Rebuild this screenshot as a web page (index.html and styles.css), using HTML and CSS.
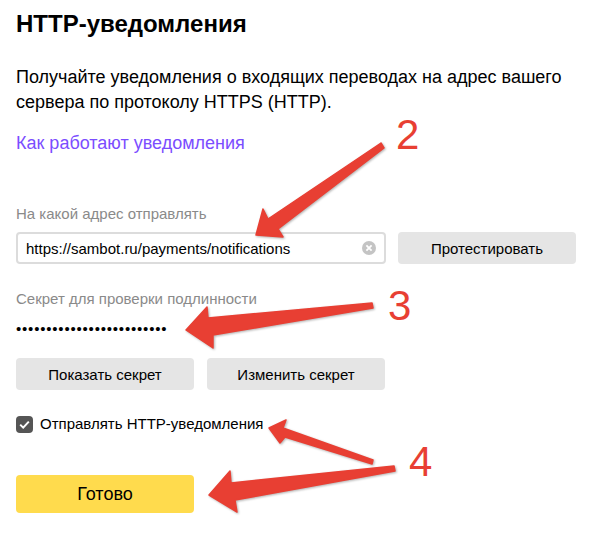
FILE: index.html
```html
<!DOCTYPE html>
<html lang="ru">
  <head>
    <meta charset="utf-8">
    <title>HTTP-уведомления</title>
    <link rel="stylesheet" href="styles.css">
  </head>
  <body>
    <div class="page">
      <h1 class="title">HTTP-уведомления</h1>
      <p class="lead">Получайте уведомления о входящих переводах на адрес вашего сервера по протоколу HTTPS (HTTP).</p>
      <a class="link" href="#">Как работают уведомления</a>

      <div class="label label-url">На какой адрес отправлять</div>
      <div class="url-row">
        <div class="field">
          <span class="field-value">https://sambot.ru/payments/notifications</span>
          <svg class="field-clear" width="14" height="14" viewBox="0 0 14 14">
            <circle cx="7" cy="7" r="7" fill="#c4c4c4"/>
            <path d="M4.4 4.4l5.2 5.2M9.6 4.4l-5.2 5.2" stroke="#fff" stroke-width="1.8" fill="none"/>
          </svg>
        </div>
        <button class="btn btn-test">Протестировать</button>
      </div>

      <div class="label label-secret">Секрет для проверки подлинности</div>
      <div class="secret">•••••••••••••••••••••••••</div>
      <div class="btn-row">
        <button class="btn">Показать секрет</button>
        <button class="btn">Изменить секрет</button>
      </div>

      <label class="check">
        <span class="check-box">
          <svg width="11" height="9" viewBox="0 0 11 9">
            <path d="M1.2 4.6l3 3 5.6-6" stroke="#fff" stroke-width="2" fill="none"/>
          </svg>
        </span>
        Отправлять HTTP-уведомления
      </label>

      <button class="btn btn-done">Готово</button>

      <!-- стрелки и цифры поверх формы -->
      <svg class="arrows" width="603" height="537" viewBox="0 0 603 537">
        <polygon points="381,143 268,219 263,209 256,235 283,237 278,229 384,148"/>
        <polygon points="372,303 208,318 207,307 186,330 213,348 213,335 373,308"/>
        <polygon points="373,460 283,428 286,420 269,428 280,443 285,437 372,464"/>
        <polygon points="394,466 231,483 230,471 209,495 237,512 235,500 395,471"/>
      </svg>
      <span class="mark mark-2">2</span>
      <span class="mark mark-3">3</span>
      <span class="mark mark-4">4</span>
    </div>
  </body>
</html>
```

FILE: styles.css
```css
* {
  box-sizing: border-box;
}

html, body {
  margin: 0;
  background: #fff;
}

.page {
  position: relative;
  width: 603px;
  height: 537px;
  padding: 11px 16px 0;
  overflow: hidden;
  font-family: "Liberation Sans", Arial, sans-serif;
  color: #000;
}

.title {
  margin: 0;
  font-size: 24px;
  line-height: 26px;
  font-weight: bold;
}

.lead {
  width: 560px;
  margin: 28px 0 0;
  font-size: 18px;
  line-height: 25px;
}

.link {
  display: block;
  margin-top: 16px;
  font-size: 18px;
  line-height: 25px;
  color: #7b4dff;
  text-decoration: none;
}

.label {
  font-size: 15px;
  line-height: 18px;
  color: #8a8a8a;
}

.label-url {
  margin-top: 49px;
}

.url-row {
  display: flex;
  gap: 12px;
  margin-top: 9px;
}

.field {
  display: flex;
  align-items: center;
  justify-content: space-between;
  width: 370px;
  height: 32px;
  padding: 0 8px 0 8px;
  border: 2px solid #dcdcdc;
  border-radius: 4px;
  font-size: 15px;
}

.btn {
  width: 178px;
  height: 32px;
  padding: 0;
  border: 0;
  border-radius: 4px;
  background: #e5e5e5;
  font-family: inherit;
  font-size: 15px;
  color: #000;
}

.label-secret {
  margin-top: 26px;
}

.secret {
  margin-top: 11px;
  font-size: 15px;
  line-height: 20px;
  letter-spacing: 0.8px;
}

.btn-row {
  display: flex;
  gap: 13px;
  margin-top: 19px;
}

.check {
  display: flex;
  align-items: center;
  gap: 7px;
  margin-top: 25px;
  font-size: 15px;
  line-height: 18px;
}

.check-box {
  display: flex;
  align-items: center;
  justify-content: center;
  width: 17px;
  height: 17px;
  border-radius: 4px;
  background: #555;
}

.btn-done {
  display: block;
  height: 38px;
  margin-top: 42px;
  background: #ffdb4d;
  font-size: 18px;
}

.arrows {
  position: absolute;
  top: 0;
  left: 0;
  fill: #e83f33;
  stroke: #e83f33;
  stroke-width: 1.5;
  stroke-linejoin: round;
  filter: drop-shadow(1px 1px 1px rgba(0, 0, 0, 0.3));
}

.mark {
  position: absolute;
  font-size: 42px;
  line-height: 42px;
  color: #e83f33;
}

.mark-2 {
  top: 114px;
  left: 396px;
}

.mark-3 {
  top: 285px;
  left: 388px;
}

.mark-4 {
  top: 441px;
  left: 409px;
}
```
